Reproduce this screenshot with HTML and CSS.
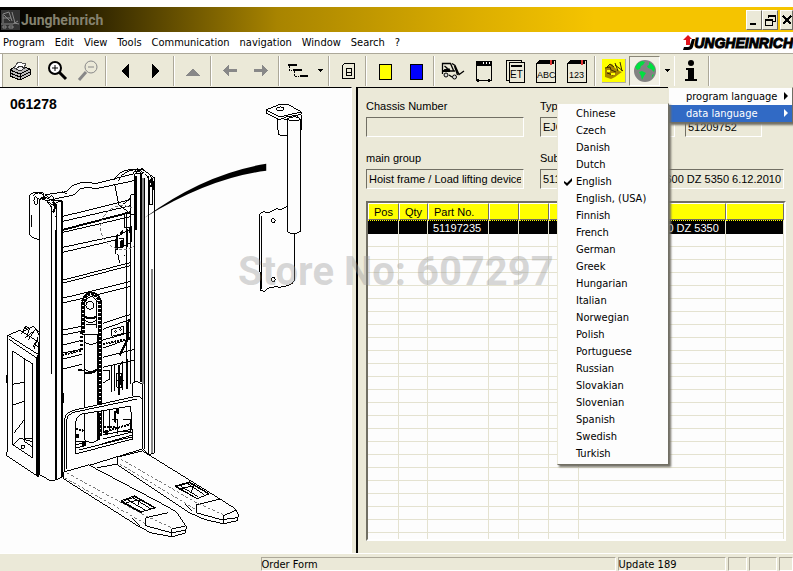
FILE: index.html
```html
<!DOCTYPE html>
<html lang="en">
<head>
<meta charset="utf-8">
<title>Jungheinrich</title>
<link rel="stylesheet" href="styles.css">
</head>
<body>
<header class="titlebar">
  <svg class="app-icon" width="20" height="20" viewBox="0 0 20 20"><path d="M1 0h19v20H1z" fill="#333"/><path d="M3 13V4l6-2 3 9M3 8h8M1 14h12l5-3M12 2l3 11M4 5l6 6M3 16h3v2H3zM9 16h4v2H9zM14 13l5 1" fill="none" stroke="#888" stroke-width="1"/></svg>
  <h1 class="app-name">Jungheinrich</h1>
  <div class="window-buttons">
    <button class="win-btn" aria-label="Minimize"><svg width="12" height="12"><path d="M2 9h6v2H2z"/></svg></button>
    <button class="win-btn" aria-label="Restore"><svg width="12" height="12"><path d="M4 4V1h7v6H8M4 2h7M1 5h7v6H1zM1 6h7" fill="none" stroke="#000"/></svg></button>
    <button class="win-btn win-close" aria-label="Close"><svg width="10" height="12"><path d="M1 2l8 8M9 2l-8 8" stroke="#000" stroke-width="2"/></svg></button>
  </div>
</header>

<nav class="menubar">
  <a href="#">Program</a><a href="#">Edit</a><a href="#">View</a><a href="#">Tools</a><a href="#">Communication</a><a href="#">navigation</a><a href="#">Window</a><a href="#">Search</a><a href="#">?</a>
  <div class="brand"><svg width="13" height="16" viewBox="0 0 13 16"><path d="M0 5l5-5 4 4H7v6H3V5z" fill="#e0141c"/><path d="M9 4h3l-2 8q-1 3-5 3H0l1-3h4q2 0 2-2z"/></svg><span>UNGHEINRICH</span></div>
</nav>

<div class="toolbar" role="toolbar">
  <button class="tool" aria-label="Print"><svg width="22" height="22" viewBox="0 0 22 22"><path d="M1 10l8-5 12 4v6l-10 5-10-4z" fill="#bbb" stroke="#000"/><path d="M1 10l10 4 10-5M11 14v6M1 13l10 4 10-5" fill="none" stroke="#000"/><path d="M5 8l4-6 8 2-3 5z" fill="#fff" stroke="#555"/><path d="M7 9l4-3 5 2-5 3z" fill="#eee" stroke="#333"/></svg></button>
  <span class="sep"></span>
  <button class="tool" aria-label="Zoom in"><svg class="smooth" width="22" height="22" viewBox="0 0 22 22"><circle cx="9" cy="8" r="6" fill="#fff" stroke="#000" stroke-width="2"/><path d="M6 8h6M9 5v6" stroke="#000"/><path d="M13 12l7 7" stroke="#000" stroke-width="3"/></svg></button>
  <button class="tool" aria-label="Zoom out"><svg class="smooth" width="22" height="22" viewBox="0 0 22 22"><circle cx="14" cy="7" r="6" fill="none" stroke="#888"/><path d="M11 7h6" stroke="#888"/><path d="M9 12l-7 8" stroke="#888" stroke-width="3"/></svg></button>
  <span class="sep"></span>
  <button class="tool" aria-label="Back"><svg width="10" height="16"><path d="M9 1v14L1 8z"/></svg></button>
  <button class="tool" aria-label="Forward"><svg width="10" height="16"><path d="M1 1v14l8-7z"/></svg></button>
  <span class="sep"></span>
  <button class="tool" aria-label="Up"><svg width="16" height="12"><path d="M1 11h14L8 3z" fill="#888"/></svg></button>
  <span class="sep"></span>
  <button class="tool" aria-label="Previous"><svg width="16" height="14"><path d="M1 6.5l6-5.5v4h8v3H7v4z" fill="#888"/></svg></button>
  <button class="tool" aria-label="Next"><svg width="16" height="14"><path d="M15 6.5L9 1v4H1v3h8v4z" fill="#888"/></svg></button>
  <span class="sep"></span>
  <button class="tool" aria-label="Tree"><svg width="22" height="16"><path d="M1 2h9M6 7h9M13 13h8" stroke="#000" stroke-width="2"/><path d="M2 3v4h3M7 8v5h5" fill="none" stroke="#000" stroke-dasharray="2 1"/></svg></button>
  <button class="tool drop" aria-label="Tree options"><svg width="6" height="4"><path d="M0 0h6L3 3z"/></svg></button>
  <span class="sep"></span>
  <button class="tool" aria-label="Document"><svg width="14" height="18"><path d="M4 1h9v15H1V4zM5 6v7h5V6zM5 10h5" fill="none" stroke="#000"/></svg></button>
  <span class="sep"></span>
  <button class="tool" aria-label="Yellow"><svg width="14" height="17"><path d="M1 1h12v15H1z" fill="#ff0" stroke="#000"/></svg></button>
  <button class="tool" aria-label="Blue"><svg width="14" height="17"><path d="M1 1h12v15H1z" fill="#00f" stroke="#000"/></svg></button>
  <span class="sep"></span>
  <button class="tool" aria-label="Truck"><svg class="smooth" width="24" height="20" viewBox="0 0 24 20"><path d="M1.500 9V2.500h8l3 7M3 9l5-1 1 2h5M1.500 9v4M3.500 5l3 2.500M11 2.500l3 2 4 9M13.500 5l3 9M8 14l3 2M17.500 14l5.500-4" fill="none" stroke="#000" stroke-width="1.300"/><path d="M2 9h7v2H2z"/><circle cx="5" cy="14" r="2" fill="#ddd" stroke="#000"/><circle cx="13.500" cy="16" r="2" fill="#ddd" stroke="#000"/></svg></button>
  <button class="tool" aria-label="Cabinet"><svg width="18" height="22"><path d="M1 1h15v19H1z" fill="none" stroke="#000"/><path d="M1 1h15v5H1z"/><path d="M8 3h1M11 3h1M14 3h1" stroke="#fff" stroke-width="2"/><path d="M3 19v3M14 19v3" stroke="#000" stroke-width="2"/></svg></button>
  <button class="tool" aria-label="ET"><svg width="20" height="24"><path d="M4 21H1V1h15v2M4 3h15v20H4z" fill="none" stroke="#000"/><path d="M6 6h11v2H6z"/><text x="5" y="19" class="icon-text wide">ET</text></svg></button>
  <button class="tool" aria-label="ABC"><svg width="22" height="24"><path d="M5 1h15v22H1V5z" fill="none" stroke="#000"/><path d="M5 1h14v4H1z"/><path d="M15 1h2v5h-2z" fill="#d33"/><text x="2" y="19" class="icon-text">ABC</text></svg></button>
  <button class="tool" aria-label="123"><svg width="22" height="24"><path d="M5 1h15v22H1V5z" fill="none" stroke="#000"/><path d="M5 1h14v4H1z"/><path d="M15 1h2v5h-2z" fill="#d33"/><text x="3" y="19" class="icon-text">123</text></svg></button>
  <span class="sep"></span>
  <button class="tool" aria-label="Parts"><svg class="smooth" width="24" height="24"><path d="M0 0h24v24H0z" fill="#ff0"/><path d="M0 23.500h23.500V0" fill="none" stroke="#aaa"/><path d="M3 9l7-4 3 4 4 3 3 1-3 2-4 3-4 2-6-2z" fill="#a88400"/><path d="M3 9l5-1 1 3 5 2M5 8l3-3 4 3M5 14l6 2M13 4l3 8M18 3l2 9M13 6l8 6" fill="none" stroke="#3a2c00"/><path d="M5 11h3v2H5zM9 14h4v2H9z" fill="#ff0"/></svg></button>
  <button class="tool pressed" aria-label="Language"><svg class="smooth" width="24" height="24"><circle cx="12" cy="12" r="11" fill="#828282"/><path d="M2 8l3-4 4-2 3 1-2 3-2 1-1 3-3 1zM6 13l3-1 4 2-2 3-2 4-1-4zM16 3l3 2 3 4-1 4-3-3-3-1-1-2 2-1zM19 16l2-1-2 4z" fill="#00e040"/></svg></button>
  <button class="tool drop drop-open" aria-label="Language menu"><svg width="6" height="4"><path d="M0 0h6L3 3z"/></svg></button>
  <button class="tool" aria-label="Information"><svg class="smooth" width="12" height="24"><circle cx="6" cy="4" r="3"/><path d="M1 9h8v11h3v2H0v-2h3v-9H1z"/></svg></button>
  <span class="sep"></span>
</div>

<main class="workspace">
  <figure class="drawing">
    <figcaption>061278</figcaption>
    <svg class="plan" viewBox="0 88 352 465" preserveAspectRatio="xMinYMin meet" role="img" aria-label="Stacker truck with lifting bracket">
      <g class="ink">
        <!-- battery housing -->
        <path class="solid" d="M8 336L20 331 39 343V478L37 477 7 457z"/>
        <path d="M8 336L38 355M9 340L37 359V477M13 352L33 365V459L13 446zM25 360V443L33 448M13 385L25 383M13 406L25 402M25 420L14 434M13 446L20 439 33 443M25 440H33M7 376v8M21 335l5-8 4 2-3 7M23 332l10-5 7 6M28 341l8-12 4 8M33 348l5-8M34 344l6 6"/>
        <path d="M24 328l5 3M25 339l11-9M34 350l4-12"/>
        <path class="heavy" d="M38 356V477"/>
        <circle cx="23" cy="448" r="2"/>
        <!-- cross members -->
        <path d="M62 217L131 200M62 222L131 206M62 233L131 217M62 248L118 236M62 253L118 240M62 281L131 263M62 284L131 266M62 299L131 282M62 304L131 287M62 331L82 327M62 336L82 332M103 324L131 315M103 330L131 320M62 346L82 341M102 341L131 333M62 354L82 350M103 349L131 339M62 360L82 355M103 358L135 350V361L103 368M62 370L82 365"/>
        <path d="M62 230L131 212M62 231L131 213"/>
        <path class="dotted" d="M62 356L82 351M103 345L131 339"/>
        <path d="M45 195L66 192 73 186Q83 180 96 184L134 174M47 201L75 195 80 189Q88 186 96 189L134 181M62 192l5 2M115 185l4 20 12 9M119 181Q121 172 138 169M115 180Q119 168 139 170M123 205l8-7M131 195h4v20h-4z"/>
        <!-- guide rail and hoist fittings -->
        <path d="M127 214V390M131 214V385M125 214h6v14h-6zM112 330l12-3v7l-12 3zM116 239v15M118 254l2 10M124 256h1"/>
        <circle cx="116" cy="332" r="1"/><circle cx="121" cy="330" r="1"/>
        <path class="block" d="M117 235h1v15h-1zM121 232l2-1v3l-2 1zM121 241h2v7h-2zM127 230h1v17h-1zM130 228l2-2v16h-1z"/>
        <path d="M117 237L130 230M117 249L130 244M119 239h5v8"/>
        <path class="heavy" d="M129 320L128 340 120 356"/>
        <ellipse class="fine" cx="123" cy="228" rx="22" ry="22"/>
        <!-- lift cylinder and chain -->
        <path class="solid" d="M85 328V441Q91 446 98 441V328z"/>
        <path class="solid" d="M82 335V304Q84 293 92 293 100 294 102 304V335z"/>
        <path class="chain" d="M83 334V304Q85 294 92 294 99 295 100 304V437"/>
        <path class="chain-edge" d="M82 334V304Q84 293 92 293 101 294 102 304V437M99 328V437"/>
        <path class="chain-small" d="M82 333V353"/>
        <path d="M85 328V303Q88 297 92 297 97 299 97 303V329M85 321Q91 326 97 320M85 343Q91 347 98 343M85 370Q91 375 98 369M79 371h6"/>
        <path class="heavy" d="M84 317Q91 321 97 317M78 371h4M84 373Q91 376 98 370"/>
        <path d="M86 325h10"/>
        <circle cx="90" cy="306" r="4"/>
        <!-- hydraulics -->
        <path d="M103 371H110V380L103 384M112 367V393M115 365V392M117 374h5v14h-5zM123 362V391M128 360V390M104 412v22M110 410v20M112 420h6v15M123 420h8v12h-8M64 394v10"/>
        <path d="M119 366V396M120 366V396M121 377v9M116 381h8M122 363l-4 6"/>
        <!-- left mast -->
        <path class="solid" d="M40 199L45 200 52 205 62 201V478L56 481 51 482 40 476z"/>
        <path d="M52 206V375M56 230V481M57 204V480"/>
        <path class="heavy" d="M62 201V478"/>
        <path class="solid" d="M30 195Q35 191 43 193L44 199 40 199V240Q32 239 30 235z"/>
        <path d="M33 196Q38 191 44 195M36 198l4 2 5-3 8 4 8 0M46 200l6 8M45 195l4 3 3-2 3 4M54 202Q59 210 56 217"/>
        <path class="heavy" d="M53 202Q57 208 53 213M41 198h5"/>
        <ellipse cx="36" cy="201" rx="2" ry="4"/><path d="M32 215v12"/>
        <!-- right mast -->
        <path class="solid" d="M135 174L142 169 149 174 155 178V454L149 456 143 450V397L135 394z"/>
        <path d="M137 176V230M145 178V450M149 176V456M153 182v23h-3v-23z"/>
        <path d="M135 172L143 169 150 175Q155 180 154 190M139 170l5 3M146 174l5 9M133 173l4-3 6 4M136 174h6"/>
        <path class="heavy" d="M135 176V230M141 174V383M151 179Q154 183 151 187"/>
        <path class="grey" d="M143 178V385M152 270V454"/>
        <path class="solid" d="M133 384L137 382 143 385V400L133 397z"/>
        <!-- load frame -->
        <path class="solid" fill-rule="evenodd" d="M65 473V419Q66 413 75 411L137 397Q142 397 143 402V450L65 474zM76 455V422Q77 417 82 415L131 407 133 440z"/>
        <path d="M67 470V420Q68 415 75 413L137 400M76 446L86 443M76 449L84 447M76 443H86M103 440L133 433M102 445L133 436M103 436L133 430M79 451L132 438"/>
        <path class="block" d="M77 435h2v4h-2zM83 443h3v4h-3zM115 412h1v11h-1zM117 410h2v4h-2zM99 417h1v24h-1zM106 431h2v4h-2z"/>
        <path class="dotted" d="M104 433L131 425M76 430L85 432M104 428h12"/>
        <!-- far fork -->
        <path class="solid" d="M118 458L143 452 222 501 236 510 239 516 238 522 224 525 206 521 190 514 118 466z"/>
        <path d="M197 506L222 500M197 506V514L222 521 238 519M224 517V524M224 517L238 511M185 505l7 7"/>
        <path class="fine" d="M121 460L197 504 224 516M120 465L197 511"/>
        <path class="solid" d="M175 487L190 483 210 495 197 500z"/>
        <path d="M176 488L190 484 209 495M180 490L194 487M187 484L205 496M182 488L199 498M194 487l-2 6M175 488l22 12"/>
        <!-- near fork -->
        <path class="solid" d="M64 473L89 466 157 502 177 513 187 528 186 534 172 538 151 534 138 527 64 480z"/>
        <path d="M97 469L118 465M146 519L168 514M146 519V527L172 534 187 531M172 530V538M172 530L186 527M132 519l8 8"/>
        <path class="fine" d="M67 474L146 517 172 529M65 479L146 525"/>
        <path class="solid" d="M121 502L135 497 156 509 142 513z"/>
        <path d="M122 503L135 498 155 509M126 504L140 501M132 498L151 510M128 501L145 511M140 501l-2 6M121 503l21 11"/>
        <!-- enlarged bracket -->
        <path class="wedge" d="M145 218Q205 174 267 164V171Q210 178 145 218z"/>
        <path class="solid" d="M278 117L279 134Q282 137 288 136V120zM298 112L302 115V130H300z"/>
        <path class="solid" d="M267 110L279 105 288 104 302 112Q303 115 299 115L287 117 280 120 267 113z"/>
        <path d="M267 110L281 117 302 112"/>
        <ellipse cx="281" cy="109" rx="4" ry="2"/>
        <path class="solid" d="M260 215L264 212 270 213 277 209 281 210 288 207H295V281Q294 285 289 286L280 288 278 287 268 289 266 292 261 291z"/>
        <path d="M262 216V290"/>
        <circle cx="274" cy="221" r="2"/><circle cx="274" cy="280" r="2"/>
        <path class="solid" d="M288 119V232Q294 236 301 232V119z"/>
        <ellipse class="solid" cx="295" cy="119" rx="6" ry="2"/>
      </g>
    </svg>
  </figure>

  <section class="details">
    <form class="fields">
      <div class="field"><label for="chassis">Chassis Number</label><input id="chassis" type="text"></div>
      <div class="field-pair">
        <div class="field type"><label for="type">Type</label><input id="type" type="text" value="EJC"></div>
        <div class="field number"><input id="number" type="text" aria-label="Number" value="51209752"></div>
      </div>
      <div class="field"><label for="group">main group</label><input id="group" type="text" value="Hoist frame / Load lifting device"></div>
      <div class="field"><label for="sub">Sub</label>
        <div class="joined"><input id="sub" class="code" type="text" value="511"><input type="text" aria-label="Description" value="600 DZ 5350 6.12.2010"></div>
      </div>
    </form>
    <div class="list">
      <table>
        <colgroup><col class="c-pos"><col class="c-qty"><col class="c-part"><col class="c-s"><col class="c-s"><col class="c-s"><col class="c-desc"><col class="c-last"></colgroup>
        <thead><tr><th>Pos</th><th>Qty</th><th>Part No.</th><th></th><th></th><th></th><th></th><th></th></tr></thead>
        <tbody>
          <tr class="selected"><td></td><td></td><td>51197235</td><td></td><td></td><td></td><td class="tail">0 DZ 5350</td><td></td></tr>
          <tr class="blank"><td></td><td></td><td></td><td></td><td></td><td></td><td></td><td></td></tr>
        </tbody>
      </table>
    </div>
  </section>

  <p class="watermark">Store No: 607297</p>

  <div class="menu language-menu" role="menu">
    <button class="menu-item parent" role="menuitem">program language</button>
    <button class="menu-item parent active" role="menuitem">data language</button>
    <div class="menu submenu" role="menu">
      <button class="menu-item">Chinese</button>
      <button class="menu-item">Czech</button>
      <button class="menu-item">Danish</button>
      <button class="menu-item">Dutch</button>
      <button class="menu-item checked"><svg width="8" height="8"><path d="M0 3l3 2 5-5v3L3 8 0 5z"/></svg>English</button>
      <button class="menu-item">English, (USA)</button>
      <button class="menu-item">Finnish</button>
      <button class="menu-item">French</button>
      <button class="menu-item">German</button>
      <button class="menu-item">Greek</button>
      <button class="menu-item">Hungarian</button>
      <button class="menu-item">Italian</button>
      <button class="menu-item">Norwegian</button>
      <button class="menu-item">Polish</button>
      <button class="menu-item">Portuguese</button>
      <button class="menu-item">Russian</button>
      <button class="menu-item">Slovakian</button>
      <button class="menu-item">Slovenian</button>
      <button class="menu-item">Spanish</button>
      <button class="menu-item">Swedish</button>
      <button class="menu-item">Turkish</button>
    </div>
  </div>
</main>

<footer class="statusbar">
  <span class="status-gap"></span>
  <span class="panel order">Order Form</span>
  <span class="panel update">Update 189</span>
  <span class="panel narrow"></span>
  <span class="panel medium"></span>
  <span class="panel end"></span>
</footer>
</body>
</html>
```
FILE: styles.css
```css
* { box-sizing: border-box; }

body {
  margin: 0;
  padding-top: 7px;
  height: 100vh;
  display: flex;
  flex-direction: column;
  overflow: hidden;
  background: #fff;
  color: #000;
  font: 11px/16px "DejaVu Sans Condensed", "DejaVu Sans", sans-serif;
}

button, input { font: inherit; color: inherit; }
button { padding: 0; border: 0; background: none; }
svg { display: block; flex: none; }

.titlebar {
  flex: 0 0 25px;
  display: flex;
  align-items: center;
  background: linear-gradient(90deg, #000 0, #0c0900 5%, #a88400 35%, #dcae00 60%, #f5c400 75%);
}
.app-name {
  margin: 0;
  padding-left: 1px;
  flex: 1;
  color: #85826f;
  font: bold 14px/20px Roboto, sans-serif;
}
.window-buttons { display: flex; }
.win-btn {
  width: 16px;
  height: 20px;
  display: grid;
  place-items: center;
  background: #ebe9d8;
  border: 1px solid;
  border-color: #fff #716f64 #716f64 #fff;
}
.win-btn svg { shape-rendering: crispEdges; }
.win-close { width: 13px; margin-left: 2px; }

.menubar {
  flex: 0 0 22px;
  display: flex;
  align-items: center;
  gap: 10px;
  padding-left: 3px;
  border-bottom: 1px solid #aca899;
}
.menubar a { color: #000; text-decoration: none; }
.brand {
  margin-left: auto;
  display: flex;
  align-items: center;
  font: italic bold 14px/16px "Liberation Sans", sans-serif;
  -webkit-text-stroke: 1px #000;
}
.brand svg { margin-right: -2px; }

.toolbar {
  flex: 0 0 33px;
  display: flex;
  align-items: stretch;
  margin-left: 2px;
  padding: 2px 0 1px 1px;
  background: #ebe9d8;
  border-left: 1px solid #aca899;
}
.tool { flex: none; width: 31px; display: grid; place-items: center; }
.tool svg { shape-rendering: crispEdges; }
.tool .smooth { shape-rendering: auto; }
.drop { width: 13px; }
.drop-open { width: 15px; border-right: 1px solid #fff; }
.pressed { border: 1px solid; border-color: #8a8778 #fff #fff #8a8778; background: #f1efe4; }
.sep {
  flex: none;
  width: 2px;
  margin: 0 2px;
  background: #aca899;
  border-right: 1px solid #fff;
}
.icon-text { font: 9px "Liberation Sans", sans-serif; }
.wide { font-size: 10px; }

.workspace {
  flex: 1;
  min-height: 0;
  position: relative;
  display: grid;
  grid-template-columns: 356fr 437fr;
  background: #ebe9d8;
}
.drawing {
  margin: 0 4px 0 0;
  position: relative;
  min-width: 0;
  min-height: 0;
  background: #fdfdfd;
  border-top: 1px solid #000;
  border-right: 1px solid #fff;
  overflow: hidden;
}
.drawing figcaption {
  position: absolute;
  left: 10px;
  top: 8px;
  font: bold 14px/16px "Liberation Sans", sans-serif;
}
.plan { width: 100%; }
.ink { fill: none; stroke: #000; stroke-width: 1; shape-rendering: crispEdges; }
.solid { fill: #fdfdfd; }
.heavy { stroke-width: 2; }
.block { fill: #000; }
.wedge { fill: #000; stroke: none; shape-rendering: auto; }
.grey { stroke: #888; stroke-width: 2; }
.fine { stroke: #777; stroke-dasharray: 3 2; }
.dotted { stroke-width: 2; stroke-dasharray: 2 1; }
.chain { stroke-width: 4; stroke-dasharray: 3 1; }
.chain-edge { stroke-width: 1; }
.chain-small { stroke-width: 3; stroke-dasharray: 2 2; }

.details {
  min-width: 0;
  min-height: 0;
  display: flex;
  flex-direction: column;
  gap: 12px;
  padding: 10px 7px 12px 8px;
  border-left: 2px solid #000;
  border-top: 1px solid #000;
  font: 11px/16px "Liberation Sans", sans-serif;
}
.fields {
  display: grid;
  grid-template-columns: 158fr 244fr;
  gap: 13px 16px;
  padding-right: 2px;
}
.field { display: flex; flex-direction: column; gap: 3px; min-width: 0; }
.field-pair { display: flex; gap: 10px; }
.type { flex: 135; }
.number { flex: 77; margin-right: 22px; justify-content: flex-end; }
.field input, .joined {
  width: 100%;
  height: 20px;
  padding: 0 2px;
  background: #ebe9d8;
  border: 1px solid;
  border-color: #716f64 #fff #fff #716f64;
}
.joined { display: flex; padding: 0; }
.joined input { border: 0; height: 18px; text-align: right; }
.joined .code { width: 40px; text-align: left; }

.list {
  flex: 1;
  min-height: 0;
  border: 2px solid;
  border-color: #716f64 #fff #fff #716f64;
  background: #fdfdfd;
}
table { width: 100%; height: 100%; table-layout: fixed; border-collapse: separate; border-spacing: 0; }
.c-pos { width: 31px; }
.c-qty { width: 29px; }
.c-part { width: 61px; }
.c-s { width: 30px; }
.c-last { width: 14%; }
th {
  height: 17px;
  padding: 0 0 0 5px;
  background: #ff0;
  border: 1px solid;
  border-color: #fff #716f64 #716f64 #fff;
  font-weight: normal;
  line-height: 14px;
  text-align: left;
}
td { padding: 0; border-right: 1px solid #e4e2d0; }
.selected td {
  height: 14px;
  padding-left: 5px;
  line-height: 12px;
  color: #fff;
  background: #000;
  border-top: 1px dotted #ff0;
  white-space: nowrap;
}
.selected .tail { text-align: right; padding-right: 6px; }
.blank td { background: repeating-linear-gradient(#fdfdfd 0 12px, #e4e2d0 12px 13px); }

.watermark {
  position: absolute;
  left: 30%;
  top: 165px;
  margin: 0;
  color: rgba(150, 150, 150, 0.38);
  font: bold 40px/40px Roboto, sans-serif;
  white-space: nowrap;
  pointer-events: none;
}

.menu {
  position: absolute;
  background: #fdfdfd;
  border: 1px solid;
  border-color: #ebe9d8 #716f64 #716f64 #ebe9d8;
  box-shadow: 2px 2px 2px #716f64;
}
.language-menu { top: 0; right: 0; width: 125px; }
.submenu { top: 15px; right: 123px; width: 112px; padding: 1px 1px 2px; color: #000; }
.menu-item {
  display: block;
  position: relative;
  width: 100%;
  height: 17px;
  padding-left: 17px;
  line-height: 17px;
  text-align: left;
  white-space: nowrap;
}
.active { background: #316ac5; color: #fff; }
.parent::after {
  content: "";
  position: absolute;
  right: 4px;
  top: 4px;
  border: 4px solid transparent;
  border-left-color: currentColor;
  border-right: 0;
}
.checked svg { position: absolute; left: 5px; top: 5px; }

.statusbar {
  flex: 0 0 18px;
  min-height: 0;
  display: flex;
  gap: 2px;
  padding-top: 3px;
  background: #ebe9d8;
  border-top: 1px solid #fff;
}
.status-gap { flex: 260; }
.panel {
  flex: none;
  min-width: 0;
  border: 1px solid;
  border-color: #aca899 #fff #fff #aca899;
  line-height: 14px;
  white-space: nowrap;
}
.order { flex: 355; }
.update { flex: 107; }
.narrow { width: 19px; }
.medium { width: 28px; }
.end { width: 14px; }
```
